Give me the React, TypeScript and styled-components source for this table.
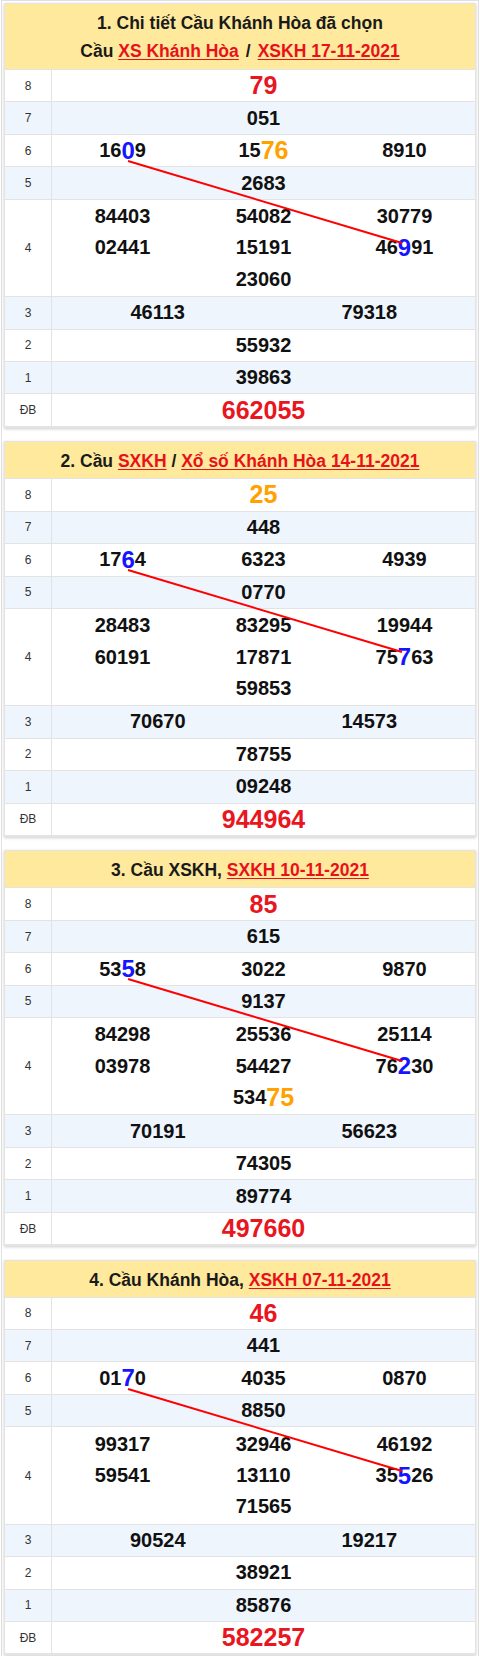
import React from 'react';
import styled, { createGlobalStyle } from 'styled-components';

const GlobalStyle = createGlobalStyle`
  html, body { margin: 0; padding: 0; background: #fff; }
  body { font-family: "Liberation Sans", Arial, sans-serif; }
`;

type Seg = { t: string; c?: 'blue' | 'orange' };
type Cell = Seg[];
type RowData = { label: string; cols: number; cells: Cell[]; big?: boolean };
type CardData = { title: React.ReactNode; twoLine?: boolean; rows: RowData[] };

const n = (t: string): Cell => [{ t }];

const Page = styled.div`
  margin: 0 1px;
  border: 1px solid #e0e0e0;
  border-bottom: none;
  padding: 2px 2px 1px;
  box-sizing: border-box;
  min-height: 1656px;
`;

const Card = styled.section`
  background: #fff;
  border: 1px solid #e4e4e4;
  box-shadow: 0 1px 3px rgba(0, 0, 0, 0.2);
  margin-bottom: 13.4px;
`;

const Header = styled.div<{ $twoLine?: boolean }>`
  background: #ffe99c;
  padding: ${(p) => (p.$twoLine ? '5px 8px 4px' : '5px 8px 3px')};
  text-align: center;
  font-weight: bold;
  font-size: 17.5px;
  line-height: 28px;
  color: #1a1a1a;
  border-bottom: 1px solid #e3e3e3;
`;

const Link = styled.a`
  color: #e8111b;
  text-decoration: underline;
  text-underline-offset: 2px;
`;

const Sep = styled.span`
  margin: 0 7px;
`;

const Body = styled.div`
  position: relative;
`;

const Row = styled.div<{ $alt: boolean }>`
  display: flex;
  background: ${(p) => (p.$alt ? '#eef5fd' : '#fff')};
  border-bottom: 1px solid #e3e3e3;
  &:last-child {
    border-bottom: none;
  }
`;

const Label = styled.div`
  flex: 0 0 46px;
  border-right: 1px solid #e3e3e3;
  display: flex;
  align-items: center;
  justify-content: center;
  font-size: 12px;
  color: #333;
`;

const Cells = styled.div<{ $multi: boolean }>`
  flex: 1;
  display: flex;
  flex-wrap: wrap;
  justify-content: center;
  padding: ${(p) => (p.$multi ? '1px 0' : '0')};
`;

const Num = styled.div<{ $cols: number; $big?: boolean }>`
  width: ${(p) => 100 / p.$cols}%;
  height: 31.45px;
  display: flex;
  align-items: center;
  justify-content: center;
  font-weight: bold;
  font-size: ${(p) => (p.$big ? '25px' : '20px')};
  color: ${(p) => (p.$big ? '#e8161f' : '#111')};
`;

const Hi = styled.span<{ $c: 'blue' | 'orange' }>`
  color: ${(p) => (p.$c === 'blue' ? '#1515ff' : '#ffa200')};
  font-size: ${(p) => (p.$c === 'blue' ? '24px' : '25px')};
`;

const Overlay = styled.svg`
  position: absolute;
  left: 0;
  top: 0;
  width: 100%;
  height: 100%;
  pointer-events: none;
`;

const cards: CardData[] = [
  {
    twoLine: true,
    title: (
      <>
        1. Chi tiết Cầu Khánh Hòa đã chọn
        <br />
        Cầu <Link href="#">XS Khánh Hòa</Link>
        <Sep>/</Sep>
        <Link href="#">XSKH 17-11-2021</Link>
      </>
    ),
    rows: [
      { label: '8', cols: 1, big: true, cells: [n('79')] },
      { label: '7', cols: 1, cells: [n('051')] },
      {
        label: '6',
        cols: 3,
        cells: [
          [{ t: '16' }, { t: '0', c: 'blue' }, { t: '9' }],
          [{ t: '15' }, { t: '76', c: 'orange' }],
          n('8910'),
        ],
      },
      { label: '5', cols: 1, cells: [n('2683')] },
      {
        label: '4',
        cols: 3,
        cells: [
          n('84403'),
          n('54082'),
          n('30779'),
          n('02441'),
          n('15191'),
          [{ t: '46' }, { t: '9', c: 'blue' }, { t: '91' }],
          n('23060'),
        ],
      },
      { label: '3', cols: 2, cells: [n('46113'), n('79318')] },
      { label: '2', cols: 1, cells: [n('55932')] },
      { label: '1', cols: 1, cells: [n('39863')] },
      { label: 'ĐB', cols: 1, big: true, cells: [n('662055')] },
    ],
  },
  {
    title: (
      <>
        2. Cầu <Link href="#">SXKH</Link> / <Link href="#">Xổ số Khánh Hòa 14-11-2021</Link>
      </>
    ),
    rows: [
      { label: '8', cols: 1, big: true, cells: [[{ t: '25', c: 'orange' }]] },
      { label: '7', cols: 1, cells: [n('448')] },
      {
        label: '6',
        cols: 3,
        cells: [[{ t: '17' }, { t: '6', c: 'blue' }, { t: '4' }], n('6323'), n('4939')],
      },
      { label: '5', cols: 1, cells: [n('0770')] },
      {
        label: '4',
        cols: 3,
        cells: [
          n('28483'),
          n('83295'),
          n('19944'),
          n('60191'),
          n('17871'),
          [{ t: '75' }, { t: '7', c: 'blue' }, { t: '63' }],
          n('59853'),
        ],
      },
      { label: '3', cols: 2, cells: [n('70670'), n('14573')] },
      { label: '2', cols: 1, cells: [n('78755')] },
      { label: '1', cols: 1, cells: [n('09248')] },
      { label: 'ĐB', cols: 1, big: true, cells: [n('944964')] },
    ],
  },
  {
    title: (
      <>
        3. Cầu XSKH, <Link href="#">SXKH 10-11-2021</Link>
      </>
    ),
    rows: [
      { label: '8', cols: 1, big: true, cells: [n('85')] },
      { label: '7', cols: 1, cells: [n('615')] },
      {
        label: '6',
        cols: 3,
        cells: [[{ t: '53' }, { t: '5', c: 'blue' }, { t: '8' }], n('3022'), n('9870')],
      },
      { label: '5', cols: 1, cells: [n('9137')] },
      {
        label: '4',
        cols: 3,
        cells: [
          n('84298'),
          n('25536'),
          n('25114'),
          n('03978'),
          n('54427'),
          [{ t: '76' }, { t: '2', c: 'blue' }, { t: '30' }],
          [{ t: '534' }, { t: '75', c: 'orange' }],
        ],
      },
      { label: '3', cols: 2, cells: [n('70191'), n('56623')] },
      { label: '2', cols: 1, cells: [n('74305')] },
      { label: '1', cols: 1, cells: [n('89774')] },
      { label: 'ĐB', cols: 1, big: true, cells: [n('497660')] },
    ],
  },
  {
    title: (
      <>
        4. Cầu Khánh Hòa, <Link href="#">XSKH 07-11-2021</Link>
      </>
    ),
    rows: [
      { label: '8', cols: 1, big: true, cells: [n('46')] },
      { label: '7', cols: 1, cells: [n('441')] },
      {
        label: '6',
        cols: 3,
        cells: [[{ t: '01' }, { t: '7', c: 'blue' }, { t: '0' }], n('4035'), n('0870')],
      },
      { label: '5', cols: 1, cells: [n('8850')] },
      {
        label: '4',
        cols: 3,
        cells: [
          n('99317'),
          n('32946'),
          n('46192'),
          n('59541'),
          n('13110'),
          [{ t: '35' }, { t: '5', c: 'blue' }, { t: '26' }],
          n('71565'),
        ],
      },
      { label: '3', cols: 2, cells: [n('90524'), n('19217')] },
      { label: '2', cols: 1, cells: [n('38921')] },
      { label: '1', cols: 1, cells: [n('85876')] },
      { label: 'ĐB', cols: 1, big: true, cells: [n('582257')] },
    ],
  },
];

function ResultCard({ data }: { data: CardData }) {
  return (
    <Card>
      <Header $twoLine={data.twoLine}>{data.title}</Header>
      <Body>
        {data.rows.map((r, i) => (
          <Row key={r.label} $alt={i % 2 === 1}>
            <Label>{r.label}</Label>
            <Cells $multi={r.cells.length > 3}>
              {r.cells.map((cell, j) => (
                <Num key={j} $cols={r.cols} $big={r.big}>
                  {cell.map((s, k) =>
                    s.c ? (
                      <Hi key={k} $c={s.c}>
                        {s.t}
                      </Hi>
                    ) : (
                      <React.Fragment key={k}>{s.t}</React.Fragment>
                    )
                  )}
                </Num>
              ))}
            </Cells>
          </Row>
        ))}
        <Overlay>
          <line x1={123} y1={91} x2={397} y2={173} stroke="#ff0000" strokeWidth={2} />
        </Overlay>
      </Body>
    </Card>
  );
}

export default function App() {
  return (
    <>
      <GlobalStyle />
      <Page>
        {cards.map((c, i) => (
          <ResultCard key={i} data={c} />
        ))}
      </Page>
    </>
  );
}
